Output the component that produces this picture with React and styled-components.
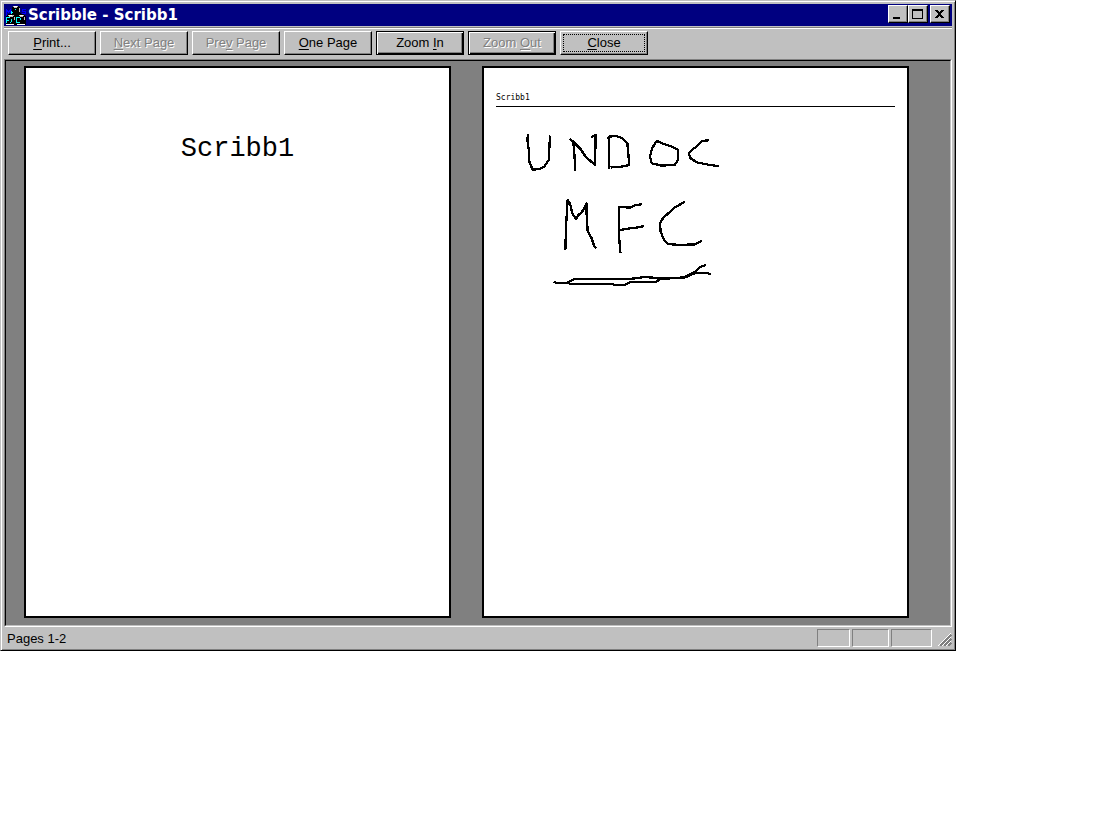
import React from "react";
import styled, { createGlobalStyle, css } from "styled-components";

const GlobalStyle = createGlobalStyle`
  *, *::before, *::after { box-sizing: border-box; }
  body {
    margin: 0;
    background: #fff;
    color: #000;
    font: 13px/16px "Liberation Sans", Arial, sans-serif;
  }
`;

const bevel = css`
  border: 1px solid;
  border-color: #fff #000 #000 #fff;
  box-shadow: inset -1px -1px #808080;
`;

const Window = styled.main`
  margin-right: 142px;
  padding: 2px;
  background: #c0c0c0;
  border: 1px solid;
  border-color: #c0c0c0 #000 #000 #c0c0c0;
  box-shadow: inset 1px 1px #fff, inset -1px -1px #808080;
`;

const Frame = styled.div`
  padding: 1px;
`;

const TitleBar = styled.header`
  display: flex;
  align-items: center;
  height: 22px;
  padding: 0 2px;
  background: #000080;
  color: #fff;
`;

const AppIcon = styled.svg`
  width: 20px;
  height: 20px;
  flex: none;
`;

const Title = styled.h1`
  flex: 1;
  margin: 0;
  padding-left: 2px;
  font: bold 15px/20px "DejaVu Sans", Verdana, sans-serif;
`;

const Captions = styled.div`
  display: flex;
  padding-bottom: 2px;
`;

const CaptionButton = styled.button`
  ${bevel}
  width: 20px;
  height: 18px;
  padding: 0;
  background: #c0c0c0;
  margin-left: ${(p) => (p.$apart ? "2px" : 0)};

  svg {
    display: block;
    width: 18px;
    height: 16px;
  }
`;

const Toolbar = styled.div`
  display: flex;
  flex-wrap: wrap;
  gap: 4px;
  margin-top: 1px;
  padding: 3px 4px 4px;
  border-top: 1px solid #808080;
  box-shadow: inset 0 1px #fff;
`;

const ToolButton = styled.button`
  ${bevel}
  width: 88px;
  height: 24px;
  padding: 0;
  background: #c0c0c0;
  color: #000;
  font: inherit;

  u {
    text-underline-offset: 2px;
    text-decoration-thickness: 1px;
  }

  &:disabled {
    color: #808080;
    text-shadow: 1px 1px #fff;
  }

  ${(p) =>
    p.$framed &&
    css`
      border-color: #000;
      box-shadow: inset 1px 1px #fff, inset -1px -1px #000, inset -2px -2px #808080;
    `}

  ${(p) =>
    p.$focused &&
    css`
      outline: 1px dotted #000;
      outline-offset: -4px;
    `}
`;

const Preview = styled.section`
  display: flex;
  align-items: flex-start;
  gap: 31px;
  padding: 5px 41px 7px 18px;
  background: #808080;
  border: 1px solid;
  border-color: #000 #c0c0c0 #c0c0c0 #000;
`;

const PreviewEdge = styled.div`
  border: 1px solid;
  border-color: #808080 #fff #fff #808080;
`;

const Sheet = styled.article`
  flex: 1;
  min-width: 0;
  aspect-ratio: 427 / 552;
  background: #fff;
  border: 2px solid #000;
`;

const CoverTitle = styled.h2`
  margin: 0;
  padding-top: 65px;
  text-align: center;
  font: 27px/32px "Liberation Mono", "Courier New", monospace;
`;

const SheetHeader = styled.p`
  margin: 0 12px;
  padding: 25px 0 3px;
  border-bottom: 1px solid #000;
  font: 8px/10px "DejaVu Sans Mono", monospace;
`;

const Drawing = styled.svg`
  display: block;
  width: 100%;
  fill: none;
  stroke: #000;
  stroke-width: 7;
  stroke-linejoin: round;
  stroke-linecap: square;
  shape-rendering: crispEdges;
`;

const StatusBar = styled.footer`
  display: flex;
  align-items: flex-end;
  gap: 2px;
  height: 20px;
  padding-left: 3px;
`;

const StatusText = styled.span`
  flex: 1;
  line-height: 16px;
`;

const Pane = styled.span`
  width: ${(p) => p.$width};
  height: 18px;
  border: 1px solid;
  border-color: #808080 #fff #fff #808080;
`;

const Grip = styled.svg`
  width: 18px;
  height: 14px;
  shape-rendering: crispEdges;
`;

const tools = [
  { before: "", key: "P", after: "rint..." },
  { before: "", key: "N", after: "ext Page", disabled: true },
  { before: "Pre", key: "v", after: " Page", disabled: true },
  { before: "", key: "O", after: "ne Page" },
  { before: "Zoom ", key: "I", after: "n", framed: true },
  { before: "Zoom ", key: "O", after: "ut", framed: true, disabled: true },
  { before: "", key: "C", after: "lose", focused: true },
];

function MfcIcon() {
  return (
    <AppIcon viewBox="0 0 20 20" shapeRendering="crispEdges" aria-hidden="true">
      <path fill="#0000ff" d="M0 4h1v1h1v1h1V5h1V4h1v4H4V7H3v1H2V7H1v4H0zM16 4h4v1h-3v1h3v3h-4V8h3V7h-3z" />
      <path fill="#000" d="M6 2h1V1h6v1h1v6h1v1h3v1h1v1h1v9H0v-9h1v-1h1V9h3V8h1z" />
      <path fill="#c0c0c0" d="M7 1h5v1h-1v1H8V2H7zM2 10h6v1H7v1H3v-1H2zM13 10h5v1h-1v1h-3v-1h-1zM13 3h1v4h-1zM8 12h1v3H8zM18 12h1v3h-1z" />
      <path fill="#fff" d="M8 1h3v1H8zM3 10h3v1H3zM14 10h3v1h-3zM0 19h8v1H0zM11 19h8v1h-8z" />
      <path fill="#00ffff" d="M5 6h1v3H5zM6 7h1v1H6zM9 4h1v1H9zM0 12h4v1H1v2h2v1H1v2H0zM5 14h1v3H5zM4 17h1v1H4zM10 12h4v1h-3v4h3v1h-4zM14 13h1v2h-1z" />
    </AppIcon>
  );
}

export default function App() {
  return (
    <>
      <GlobalStyle />
      <Window>
        <Frame>
          <TitleBar>
            <MfcIcon />
            <Title>Scribble - Scribb1</Title>
            <Captions>
              <CaptionButton type="button" aria-label="Minimize">
                <svg viewBox="0 0 18 16" shapeRendering="crispEdges"><path d="M4 11h7v2H4z" /></svg>
              </CaptionButton>
              <CaptionButton type="button" aria-label="Maximize">
                <svg viewBox="0 0 18 16" shapeRendering="crispEdges">
                  <path fillRule="evenodd" d="M3 3h11v10H3zM4 5v7h9V5z" />
                </svg>
              </CaptionButton>
              <CaptionButton type="button" aria-label="Close window" $apart>
                <svg viewBox="0 0 18 16" shapeRendering="crispEdges">
                  <path d="M4 4h3v1H4zM10 4h3v1h-3zM5 5h3v1H5zM9 5h3v1H9zM6 6h5v1H6zM7 7h3v2H7zM6 9h5v1H6zM5 10h3v1H5zM9 10h3v1H9zM4 11h3v1H4zM10 11h3v1h-3z" />
                </svg>
              </CaptionButton>
            </Captions>
          </TitleBar>

          <Toolbar role="toolbar" aria-label="Print preview">
            {tools.map((t) => (
              <ToolButton
                key={t.before + t.key + t.after}
                type="button"
                disabled={t.disabled}
                $framed={t.framed}
                $focused={t.focused}
              >
                {t.before}
                <u>{t.key}</u>
                {t.after}
              </ToolButton>
            ))}
          </Toolbar>

          <PreviewEdge>
            <Preview>
              <Sheet>
                <CoverTitle>Scribb1</CoverTitle>
              </Sheet>
              <Sheet>
                <SheetHeader>Scribb1</SheetHeader>
                <Drawing viewBox="484 107 423 200" role="img" aria-label="Handwriting: UNDOC MFC, underlined">
                  <g transform="translate(480 80) scale(.33333)">
                    <path d="M144 165L142 180L147 215L148 245L158 269L178 267L193 260L206 240L210 170" />
                    <path d="M285 270L284 235L280 185L271 178L276 182L300 205L318 232L345 254L347 165L337 170" />
                    <path d="M387 264L386 170L408 168L428 175L442 190L448 255L425 260L395 262" />
                    <path d="M530 183L516 205L510 230L515 250L545 257L585 254L594 240L595 210L575 200L552 192Z" />
                    <path d="M684 181L665 183L650 200L635 210L626 220L632 235L650 247L690 255L714 258" />
                  </g>
                  <g transform="translate(540 190) scale(.33333)">
                    <path d="M76 177L79 95L83 30L90 40L97 70L108 87L115 75L125 68L140 40L140 75L143 122L155 145L163 170L167 173" />
                    <path d="M241 185L238 150L237 50L270 53L285 46L303 43M240 120L270 115L290 113L308 109" />
                    <path d="M432 37L405 52L370 83L360 100L362 125L373 152L384 162L420 165L465 163L482 154" />
                    <path d="M44 277L50 279L82 278L104 267L268 267L315 261L360 265L430 264L465 245L480 231L495 226" />
                    <path d="M84 279L92 282L213 282L233 286L256 284L270 277L348 276L360 267L435 262L468 248L500 249L510 252" />
                  </g>
                </Drawing>
              </Sheet>
            </Preview>
          </PreviewEdge>

          <StatusBar>
            <StatusText>Pages 1-2</StatusText>
            <Pane $width="33px" />
            <Pane $width="37px" />
            <Pane $width="41px" />
            <Grip viewBox="0 0 18 14" aria-hidden="true">
              <g fill="none" strokeWidth="1">
                <path stroke="#fff" d="M4 13L17 0M8 13L17 4M12 13L17 8" />
                <path stroke="#808080" strokeWidth="2" d="M6 13L17 2M10 13L17 6M14 13L17 10" />
              </g>
            </Grip>
          </StatusBar>
        </Frame>
      </Window>
    </>
  );
}
